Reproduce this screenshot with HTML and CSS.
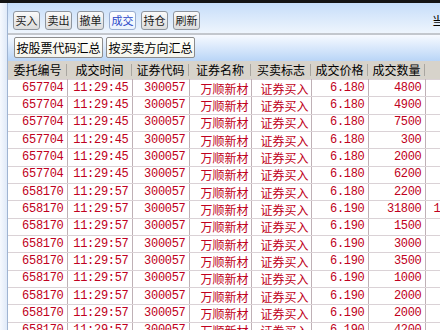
FILE: index.html
```html
<!DOCTYPE html>
<html lang="zh-CN">
<head>
    <meta charset="UTF-8">
    <title>成交查询</title>
    <link rel="stylesheet" href="styles.css">
</head>
<body>
    <div class="top"></div>
    <div class="frame">
        <div class="side"></div>
        <div class="main">
            <div class="toolbar">
                <button class="tb">买入</button>
                <button class="tb">卖出</button>
                <button class="tb">撤单</button>
                <button class="tb on">成交</button>
                <button class="tb">持仓</button>
                <button class="tb">刷新</button>
                <span class="who">当前用户</span>
            </div>
            <div class="sumbar">
                <button class="sum">按股票代码汇总</button>
                <button class="sum">按买卖方向汇总</button>
            </div>
            <table class="grid">
                <colgroup>
                    <col class="c1"><col class="c2"><col class="c3"><col class="c4">
                    <col class="c5"><col class="c6"><col class="c7"><col class="c8">
                </colgroup>
                <thead>
                    <tr>
                        <th>委托编号</th><th>成交时间</th><th>证券代码</th><th>证券名称</th>
                        <th>买卖标志</th><th>成交价格</th><th>成交数量</th><th>成交金额</th>
                    </tr>
                </thead>
                <tbody>
                    <tr><td>657704</td><td>11:29:45</td><td>300057</td><td class="cn">万顺新材</td><td class="cn">证券买入</td><td>6.180</td><td>4800</td><td class="amt">29664.000</td></tr>
                    <tr><td>657704</td><td>11:29:45</td><td>300057</td><td class="cn">万顺新材</td><td class="cn">证券买入</td><td>6.180</td><td>4900</td><td class="amt">30282.000</td></tr>
                    <tr><td>657704</td><td>11:29:45</td><td>300057</td><td class="cn">万顺新材</td><td class="cn">证券买入</td><td>6.180</td><td>7500</td><td class="amt">46350.000</td></tr>
                    <tr><td>657704</td><td>11:29:45</td><td>300057</td><td class="cn">万顺新材</td><td class="cn">证券买入</td><td>6.180</td><td>300</td><td class="amt">1854.000</td></tr>
                    <tr><td>657704</td><td>11:29:45</td><td>300057</td><td class="cn">万顺新材</td><td class="cn">证券买入</td><td>6.180</td><td>2000</td><td class="amt">12360.000</td></tr>
                    <tr><td>657704</td><td>11:29:45</td><td>300057</td><td class="cn">万顺新材</td><td class="cn">证券买入</td><td>6.180</td><td>6200</td><td class="amt">38316.000</td></tr>
                    <tr><td>658170</td><td>11:29:57</td><td>300057</td><td class="cn">万顺新材</td><td class="cn">证券买入</td><td>6.180</td><td>2200</td><td class="amt">13596.000</td></tr>
                    <tr><td>658170</td><td>11:29:57</td><td>300057</td><td class="cn">万顺新材</td><td class="cn">证券买入</td><td>6.190</td><td>31800</td><td class="amt">196842.000</td></tr>
                    <tr><td>658170</td><td>11:29:57</td><td>300057</td><td class="cn">万顺新材</td><td class="cn">证券买入</td><td>6.190</td><td>1500</td><td class="amt">9285.000</td></tr>
                    <tr><td>658170</td><td>11:29:57</td><td>300057</td><td class="cn">万顺新材</td><td class="cn">证券买入</td><td>6.190</td><td>3000</td><td class="amt">18570.000</td></tr>
                    <tr><td>658170</td><td>11:29:57</td><td>300057</td><td class="cn">万顺新材</td><td class="cn">证券买入</td><td>6.190</td><td>3500</td><td class="amt">21665.000</td></tr>
                    <tr><td>658170</td><td>11:29:57</td><td>300057</td><td class="cn">万顺新材</td><td class="cn">证券买入</td><td>6.190</td><td>1000</td><td class="amt">6190.000</td></tr>
                    <tr><td>658170</td><td>11:29:57</td><td>300057</td><td class="cn">万顺新材</td><td class="cn">证券买入</td><td>6.190</td><td>2000</td><td class="amt">12380.000</td></tr>
                    <tr><td>658170</td><td>11:29:57</td><td>300057</td><td class="cn">万顺新材</td><td class="cn">证券买入</td><td>6.190</td><td>2000</td><td class="amt">12380.000</td></tr>
                    <tr><td>658170</td><td>11:29:57</td><td>300057</td><td class="cn">万顺新材</td><td class="cn">证券买入</td><td>6.190</td><td>4200</td><td class="amt">25998.000</td></tr>
                </tbody>
            </table>
        </div>
    </div>
</body>
</html>
```

FILE: styles.css
```css
* {
    box-sizing: border-box;
}
body {
    margin: 0;
    width: 440px;
    height: 330px;
    overflow: hidden;
    background-color: #fff;
    font-family: "Noto Sans CJK SC", sans-serif;
    font-size: 12px;
}
.top {
    height: 3px;
    background-color: #141414;
}
.frame {
    display: flex;
    height: 327px;
}
.side {
    width: 8px;
    flex-shrink: 0;
    background: linear-gradient(to right, #f6f9fe, #e0eaf8);
    border-right: 1px solid #9fb4d2;
}
.main {
    flex: 1;
    min-width: 0;
    overflow: hidden;
}
.toolbar {
    height: 30px;
    display: flex;
    align-items: flex-start;
    gap: 5px;
    padding: 8px 0 0 5px;
    background: linear-gradient(#c6ddf9, #eef5fd);
    white-space: nowrap;
}
.tb {
    width: 27px;
    height: 19px;
    flex-shrink: 0;
    padding: 0;
    border: 1px solid #8e959e;
    border-radius: 3px;
    background: linear-gradient(#fafafa, #dcdcdc);
    font-family: "Noto Sans CJK SC", sans-serif;
    font-size: 11px;
    line-height: 17px;
    color: #1a1a1a;
}
.tb.on {
    background: linear-gradient(#ffffff, #eaf2fd);
    border-color: #9aaed0;
    color: #2a48c8;
}
.who {
    flex-shrink: 0;
    margin-left: 227px;
    line-height: 20px;
    color: #000;
}
.sumbar {
    height: 28px;
    display: flex;
    gap: 3px;
    padding: 2px 0 0 6px;
    border-top: 2px solid #c3c7cd;
    background: linear-gradient(#f7faff, #b9d5f7);
}
.sum {
    width: 89px;
    height: 21px;
    flex-shrink: 0;
    padding: 0;
    border: 1px solid #8c8c8c;
    border-radius: 2px;
    background: linear-gradient(#fffffb, #f4f4ec);
    font-family: "Noto Sans CJK SC", sans-serif;
    font-size: 12px;
    line-height: 19px;
    color: #000;
}
.grid {
    border-collapse: collapse;
    table-layout: fixed;
    width: 517px;
}
.c1 { width: 59px; }
.c2 { width: 65px; }
.c3 { width: 57px; }
.c4 { width: 62px; }
.c5 { width: 60px; }
.c6 { width: 57px; }
.c7 { width: 57px; }
.c8 { width: 100px; }
.grid th {
    height: 18px;
    padding: 0;
    font-weight: normal;
    font-size: 12px;
    line-height: 18px;
    text-align: center;
    color: #000;
    white-space: nowrap;
    overflow: hidden;
    background: linear-gradient(#a9a6a0, #a9a6a0) right center / 1px 12px no-repeat, #d7d3cb;
}
.grid tbody tr {
    height: 17.35px;
}
.grid td {
    padding: 0 3px 0 0;
    text-align: right;
    color: #c00020;
    font-family: "Liberation Mono", "Noto Sans CJK SC", monospace;
    font-size: 12px;
    letter-spacing: -0.3px;
    line-height: 15px;
    white-space: nowrap;
    overflow: hidden;
    border-top: 1px solid #dad2d6;
    border-bottom: 1px solid #dad2d6;
    border-left: 1px solid #bfb1b6;
    border-right: 1px solid #bfb1b6;
}
.grid td:first-child {
    border-left: none;
}
.grid td.cn {
    letter-spacing: 0;
    padding-right: 2px;
    font-family: "Noto Sans CJK SC", sans-serif;
}
.grid td.amt {
    padding-right: 22px;
}
```
